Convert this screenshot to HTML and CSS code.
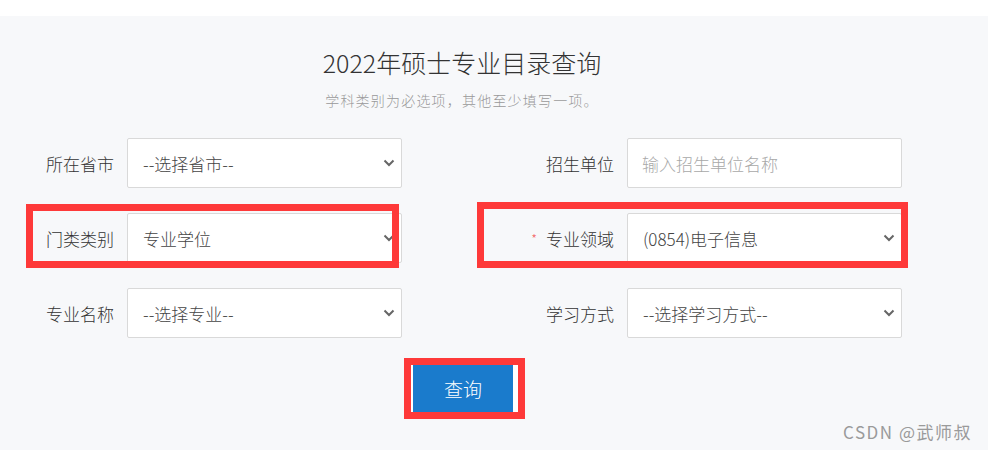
FILE: index.html
```html
<!DOCTYPE html>
<html lang="zh-CN">
<head>
<meta charset="utf-8">
<title>2022年硕士专业目录查询</title>
<link rel="stylesheet" href="styles.css">
</head>
<body>
<div class="topbar"></div>
<main class="page">
  <h1 class="title">2022年硕士专业目录查询</h1>
  <p class="subtitle">学科类别为必选项，其他至少填写一项。</p>
  <div class="form">
    <div class="field">
      <label class="label">所在省市</label>
      <div class="select"><span>--选择省市--</span><svg class="chev" width="12" height="8" viewBox="0 0 12 8"><path d="M1.5 1.5 L6 6 L10.5 1.5" fill="none" stroke="#666" stroke-width="2"/></svg></div>
    </div>
    <div class="field">
      <label class="label">招生单位</label>
      <input class="input" type="text" placeholder="输入招生单位名称">
    </div>
    <div class="field">
      <label class="label">门类类别</label>
      <div class="select"><span>专业学位</span><svg class="chev" width="12" height="8" viewBox="0 0 12 8"><path d="M1.5 1.5 L6 6 L10.5 1.5" fill="none" stroke="#666" stroke-width="2"/></svg></div>
      <div class="mark mark-left"></div>
    </div>
    <div class="field">
      <label class="label"><span class="req">*</span>专业领域</label>
      <div class="select"><span>(0854)电子信息</span><svg class="chev" width="12" height="8" viewBox="0 0 12 8"><path d="M1.5 1.5 L6 6 L10.5 1.5" fill="none" stroke="#666" stroke-width="2"/></svg></div>
      <div class="mark mark-right"></div>
    </div>
    <div class="field">
      <label class="label">专业名称</label>
      <div class="select"><span>--选择专业--</span><svg class="chev" width="12" height="8" viewBox="0 0 12 8"><path d="M1.5 1.5 L6 6 L10.5 1.5" fill="none" stroke="#666" stroke-width="2"/></svg></div>
    </div>
    <div class="field">
      <label class="label">学习方式</label>
      <div class="select"><span>--选择学习方式--</span><svg class="chev" width="12" height="8" viewBox="0 0 12 8"><path d="M1.5 1.5 L6 6 L10.5 1.5" fill="none" stroke="#666" stroke-width="2"/></svg></div>
    </div>
  </div>
  <div class="actions">
    <div class="btn-wrap">
      <button class="btn" type="button">查询</button>
      <div class="mark mark-btn"></div>
    </div>
  </div>
</main>
<div class="watermark">CSDN @武师叔</div>
</body>
</html>
```
FILE: styles.css
```css
* { box-sizing: border-box; }
html, body {
  margin: 0;
  padding: 0;
  height: 450px;
  overflow: hidden;
  background: #f7f8fa;
  font-family: "Noto Sans CJK SC", "Noto Sans", sans-serif;
}
body { position: relative; }
.topbar {
  height: 16px;
  background: #ffffff;
}
.page {
  width: 924px;
  padding-top: 29px;
}
.title {
  margin: 0;
  text-align: center;
  font-size: 25px;
  line-height: 34px;
  font-weight: 300;
  color: #333;
}
.subtitle {
  margin: 11px 0 0;
  text-align: center;
  font-size: 14px;
  line-height: 20px;
  letter-spacing: 1.2px;
  font-weight: 300;
  color: #999;
}
.form {
  margin-top: 28px;
  padding-left: 20px;
  display: grid;
  grid-template-columns: 382px 382px;
  column-gap: 118px;
  row-gap: 25px;
}
.field {
  position: relative;
  display: flex;
  align-items: center;
  height: 50px;
}
.label {
  width: 107px;
  flex: none;
  padding-right: 13px;
  text-align: right;
  font-size: 17px;
  font-weight: 300;
  color: #333;
  white-space: nowrap;
}
.req {
  color: #f25c5c;
  font-size: 13px;
  margin-right: 9px;
  position: relative;
  top: -2px;
}
.select, .input {
  width: 275px;
  height: 50px;
  flex: none;
  background: #fff;
  border: 1px solid #d9d9d9;
  border-radius: 2px;
  font-size: 17px;
  font-weight: 300;
  color: #444;
  font-family: "Noto Sans CJK SC", "Noto Sans", sans-serif;
}
.select {
  display: flex;
  align-items: center;
  justify-content: space-between;
  padding: 0 6px 0 15px;
}
.input {
  padding: 0 14px;
  outline: none;
}
.input::placeholder { color: #a8a8a8; }
.chev { display: block; }
.mark {
  position: absolute;
  border: 7px solid #fe3939;
  pointer-events: none;
}
.mark-left {
  left: 6px;
  top: -9px;
  width: 373px;
  height: 64px;
}
.mark-right {
  left: -43px;
  top: -11px;
  width: 431px;
  height: 66px;
}
.actions {
  margin-top: 27px;
  display: flex;
  justify-content: center;
  padding-left: 5px;
}
.btn-wrap {
  position: relative;
  display: flex;
  background: #fff;
  padding: 0 5px 0 2px;
}
.btn {
  width: 100px;
  height: 47px;
  border: none;
  background: #1a7bcc;
  color: #fff;
  font-size: 19px;
  font-weight: 300;
  font-family: "Noto Sans CJK SC", "Noto Sans", sans-serif;
  padding: 0;
}
.mark-btn {
  left: -7px;
  top: -7px;
  width: 121px;
  height: 61px;
}
.watermark {
  position: absolute;
  right: 16px;
  top: 420px;
  font-size: 17px;
  line-height: 24px;
  letter-spacing: 1.5px;
  color: #9a9a9a;
}
```
